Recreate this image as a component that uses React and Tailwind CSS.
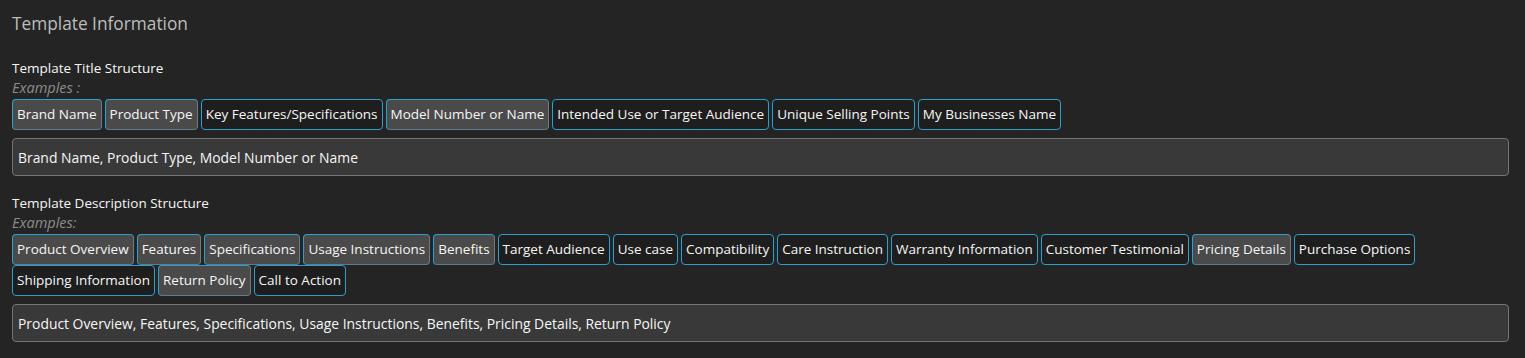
import React, { useState } from 'react';

const titleParts = [
  'Brand Name',
  'Product Type',
  'Key Features/Specifications',
  'Model Number or Name',
  'Intended Use or Target Audience',
  'Unique Selling Points',
  'My Businesses Name',
];

const descParts = [
  'Product Overview',
  'Features',
  'Specifications',
  'Usage Instructions',
  'Benefits',
  'Target Audience',
  'Use case',
  'Compatibility',
  'Care Instruction',
  'Warranty Information',
  'Customer Testimonial',
  'Pricing Details',
  'Purchase Options',
  'Shipping Information',
  'Return Policy',
  'Call to Action',
];

const Chip = ({ label, active, onClick }) => (
  <button
    type="button"
    onClick={onClick}
    className={
      active
        ? 'mr-[3px] rounded-[4px] border border-[#2a9fd0] border-r-[#6f7a80] border-b-[#5b7d8c] bg-[#4a4a4a] px-1 py-1 text-[13.5px] leading-[21px] text-[#f6f6f6]'
        : 'mr-[3px] rounded-[4px] border border-[#2a9fd0] bg-[#1e1e1e] px-1 py-1 text-[13.5px] leading-[21px] text-[#f6f6f6]'
    }
  >
    {label}
  </button>
);

const StructureField = ({ heading, examplesLabel, parts, initial }) => {
  const [selected, setSelected] = useState(initial);

  const toggle = (part) => {
    setSelected(prev =>
      prev.includes(part) ? prev.filter(p => p !== part) : [...prev, part]
    );
  };

  // keep the order the chips are listed in
  const value = parts.filter(p => selected.includes(p)).join(', ');

  return (
    <div>
      <div className="text-[13.5px] leading-[20px] text-[#f6f6f6]">{heading}</div>
      <div className="text-[14.5px] leading-[20px] italic text-[#8c8c8c]">{examplesLabel}</div>
      <div className="mt-px flex flex-wrap">
        {parts.map(part => (
          <Chip
            key={part}
            label={part}
            active={selected.includes(part)}
            onClick={() => toggle(part)}
          />
        ))}
      </div>
      <input
        type="text"
        readOnly
        value={value}
        className="mt-2 block h-[38px] w-full rounded-[4px] border border-[#747474] bg-[#393939] px-[5px] text-[13.9px] text-[#f6f6f6] outline-none"
      />
    </div>
  );
};

const App = () => {
  return (
    <div
      className="min-h-screen bg-[#242424] pl-3 pr-4 pt-[10px]"
      style={{ fontFamily: '"Open Sans", "Noto Sans", sans-serif' }}
    >
      <h2 className="text-[17.3px] font-normal leading-[28px] text-[#bdbdbd]">Template Information</h2>

      <div className="mt-5">
        <StructureField
          heading="Template Title Structure"
          examplesLabel="Examples :"
          parts={titleParts}
          initial={['Brand Name', 'Product Type', 'Model Number or Name']}
        />
      </div>

      <div className="mt-[17px]">
        <StructureField
          heading="Template Description Structure"
          examplesLabel="Examples:"
          parts={descParts}
          initial={[
            'Product Overview',
            'Features',
            'Specifications',
            'Usage Instructions',
            'Benefits',
            'Pricing Details',
            'Return Policy',
          ]}
        />
      </div>
    </div>
  );
};

export default App;
